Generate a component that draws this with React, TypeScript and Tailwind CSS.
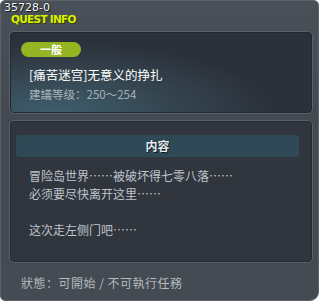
import React from 'react'

const cjk = "font-['Noto_Sans_CJK_SC','Noto_Sans',sans-serif]"

function Badge({ label }: { label: string }) {
	return (
		<div className="flex h-[15px] w-[60px] items-center justify-center rounded-full bg-[#95b523] text-[11px] font-bold leading-none text-white">
			{label}
		</div>
	)
}

export default function App() {
	const lines = ['冒险岛世界……被破坏得七零八落……', '必须要尽快离开这里……', '', '这次走左侧门吧……']

	return (
		<div className={`h-[302px] w-[322px] bg-white ${cjk}`}>
			<div className="flex h-[301px] w-[319px] flex-col rounded-[5px] rounded-br-[9px] border border-[#5b6169] bg-[linear-gradient(180deg,#4a5058_0%,#434950_40%,#454b52_100%)] pl-[8px] pr-[5px]">
				<div className="h-[30px] font-['DejaVu_Sans',sans-serif]">
					<div className="-ml-[5px] mt-[1px] text-[11px] leading-[11px] text-white [text-shadow:0_0_1px_#000,1px_1px_0_#222]">
						35728-0
					</div>
					<div className="ml-[2px] mt-[1px] text-[10.5px] font-bold leading-[10px] tracking-[-0.7px] text-[#d9f200] [text-shadow:1px_1px_0_#3a4000]">
						QUEST INFO
					</div>
				</div>

				<div className="h-[83px] rounded-[5px] border border-[#59606a] bg-[radial-gradient(ellipse_90%_110%_at_15%_100%,#3f5e6d_0%,#34444f_45%,#2b313b_80%)] pl-[11px] pt-[10px] shadow-[inset_0_0_0_1px_#23282f]">
					<Badge label="一般" />
					<div className="mt-[10px] pl-[8px] text-[12.5px] leading-[16px] text-white">[痛苦迷宫]无意义的挣扎</div>
					<div className="mt-[4px] pl-[8px] text-[11.5px] leading-[15px] text-[#a9b1b8]">建議等级：250～254</div>
				</div>

				<div className="mt-[6px] h-[143px] rounded-[5px] border border-[#59606a] bg-[#30353e] pl-[6px] pr-[13px] pt-[14px] shadow-[inset_0_0_0_1px_#262b32]">
					<div className="flex h-[22px] items-center justify-center rounded-[3px] bg-[#2f4957] text-[12px] font-bold text-[#e2eaee] [text-shadow:1px_1px_0_#111]">
						内容
					</div>
					<div className="mt-[10px] pl-[13px] text-[12px] leading-[18px] text-[#bfc5cb]">
						{lines.map((line, i) => (
							<div key={i} className="h-[18px]">
								{line}
							</div>
						))}
					</div>
				</div>

				<div className="mt-[12px] pl-[12px] text-[12px] leading-[16px] tracking-[0.5px] text-[#b3b9bf]">狀態：可開始 / 不可執行任務</div>
			</div>
		</div>
	)
}
